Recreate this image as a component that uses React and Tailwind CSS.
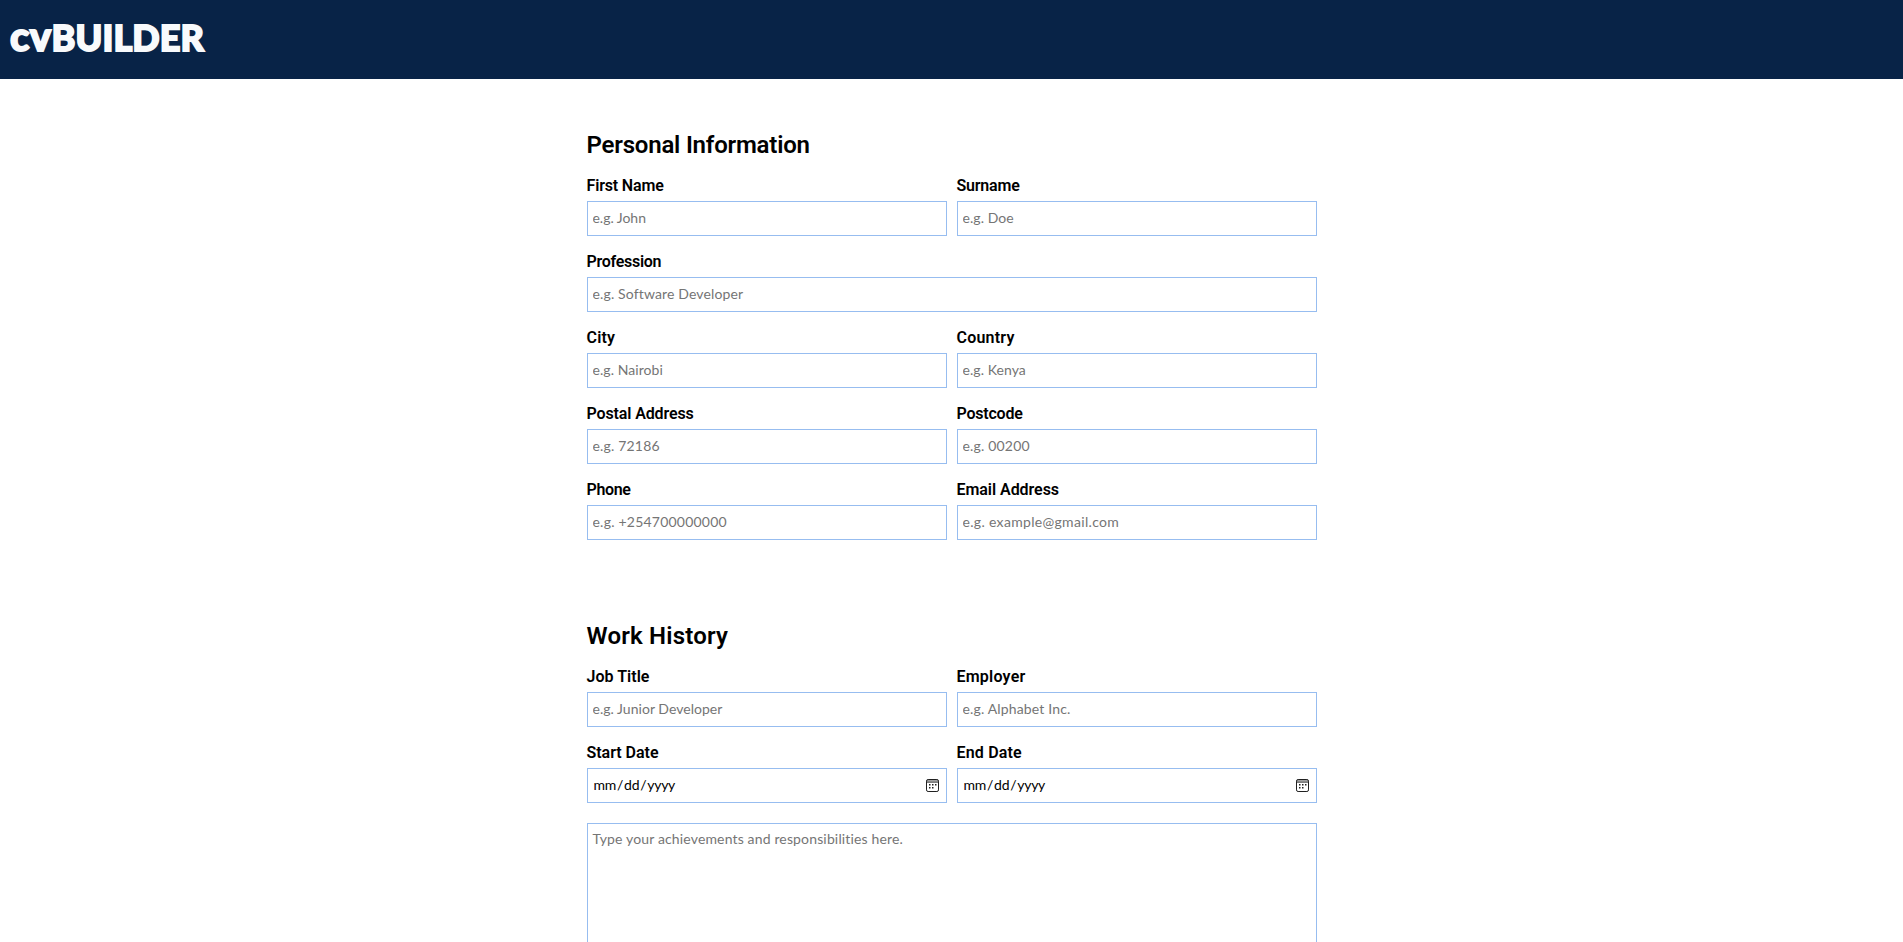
import React from 'react';

const LABEL = "block h-[21px] text-base leading-[21px] font-semibold text-black font-[Roboto,sans-serif] whitespace-nowrap";
const BOX = "w-full border border-[#97bdf0] bg-white px-[5px]";
const TEXT = "text-sm text-black outline-none font-[Lato,sans-serif] placeholder:text-[#757575] placeholder:opacity-100";

function CalendarIcon() {
  return (
    <svg viewBox="0 0 13 13" className="mr-0.5 size-[13px] shrink-0" aria-hidden="true">
      <rect x="1" y="1.2" width="11" height="2.4" fill="#8a8a8a" />
      <rect x="0.5" y="0.5" width="12" height="12" rx="1.6" fill="none" stroke="#1f1f1f" strokeWidth="1" />
      <path d="M1 3.5H12" stroke="#555" strokeWidth="0.6" />
      <g fill="#1f1f1f">
        <rect x="3" y="5" width="1.5" height="1.5" />
        <rect x="6" y="5" width="1.5" height="1.5" />
        <rect x="9" y="5" width="1.5" height="1.5" />
        <rect x="3" y="8" width="1.5" height="1.5" />
        <rect x="6" y="8" width="1.5" height="1.5" />
      </g>
    </svg>
  );
}

function Field({ label, type = 'text', placeholder, labelTracking = '', tracking = '', wide = false }) {
  return (
    <label className={`block ${wide ? 'col-span-2' : ''}`}>
      <span className={`${LABEL} ${labelTracking}`}>{label}</span>
      {type === 'date' ? (
        <span className={`${BOX} mt-[5px] flex h-[35px] items-center`}>
          <input
            type="date"
            className={`${TEXT} h-[33px] min-w-0 flex-1 pb-0.5 tracking-[-0.27px] [&::-webkit-calendar-picker-indicator]:hidden`}
          />
          <CalendarIcon />
        </span>
      ) : (
        <input type={type} placeholder={placeholder} className={`block ${BOX} ${TEXT} mt-[5px] h-[35px] pb-0.5 ${tracking}`} />
      )}
    </label>
  );
}

function Section({ title, tracking, children }) {
  return (
    <section>
      <h2 className={`mb-3.5 h-8 text-2xl leading-8 font-semibold text-black font-[Roboto,sans-serif] whitespace-nowrap ${tracking}`}>
        {title}
      </h2>
      <div className="grid grid-cols-2 gap-x-2.5 gap-y-[15px]">{children}</div>
    </section>
  );
}

export default function App() {
  return (
    <div className="h-[942px] overflow-hidden bg-white">
      <header className="flex h-[79px] items-center bg-[#082347] px-2.5">
        <h1 className="flex items-baseline pb-2 leading-none font-black text-[#f8fafc] font-[Lato,sans-serif] [-webkit-text-stroke:1.8px_#f8fafc]">
          <span className="text-[40px] tracking-[0.4px]">cv</span>
          <span className="text-[36px] tracking-[0.1px]">BUILDER</span>
        </h1>
      </header>
      <main className="mx-auto flex w-[730px] flex-col gap-20 pt-[50px]">
        <Section title="Personal Information" tracking="tracking-[-0.2px]">
          <Field label="First Name" placeholder="e.g. John" labelTracking="tracking-[-0.16px]" tracking="tracking-[-0.03px]" />
          <Field label="Surname" placeholder="e.g. Doe" labelTracking="tracking-[-0.2px]" tracking="tracking-[0.07px]" />
          <Field label="Profession" placeholder="e.g. Software Developer" labelTracking="tracking-[-0.29px]" tracking="tracking-[0.14px]" wide />
          <Field label="City" placeholder="e.g. Nairobi" labelTracking="tracking-[0.17px]" tracking="tracking-[0.07px]" />
          <Field label="Country" placeholder="e.g. Kenya" labelTracking="tracking-[0.22px]" tracking="tracking-[0.07px]" />
          <Field label="Postal Address" placeholder="e.g. 72186" labelTracking="tracking-[-0.13px]" tracking="tracking-[0.18px]" />
          <Field label="Postcode" placeholder="e.g. 00200" labelTracking="tracking-[-0.22px]" tracking="tracking-[0.18px]" />
          <Field label="Phone" placeholder="e.g. +254700000000" labelTracking="tracking-[-0.37px]" tracking="tracking-[0.22px]" />
          <Field label="Email Address" placeholder="e.g. example@gmail.com" labelTracking="tracking-[-0.05px]" tracking="tracking-[0.32px]" />
        </Section>
        <Section title="Work History" tracking="tracking-[0.2px]">
          <Field label="Job Title" placeholder="e.g. Junior Developer" labelTracking="tracking-[0.03px]" tracking="tracking-[0.03px]" />
          <Field label="Employer" placeholder="e.g. Alphabet Inc." labelTracking="tracking-[0.22px]" tracking="tracking-[0.16px]" />
          <Field label="Start Date" type="date" labelTracking="tracking-[-0.02px]" />
          <Field label="End Date" type="date" labelTracking="tracking-[0.18px]" />
          <textarea
            placeholder="Type your achievements and responsibilities here."
            className={`block ${BOX} ${TEXT} col-span-2 mt-[5px] h-[200px] resize-none py-[5px] leading-5 tracking-[0.15px]`}
          />
        </Section>
      </main>
    </div>
  );
}
